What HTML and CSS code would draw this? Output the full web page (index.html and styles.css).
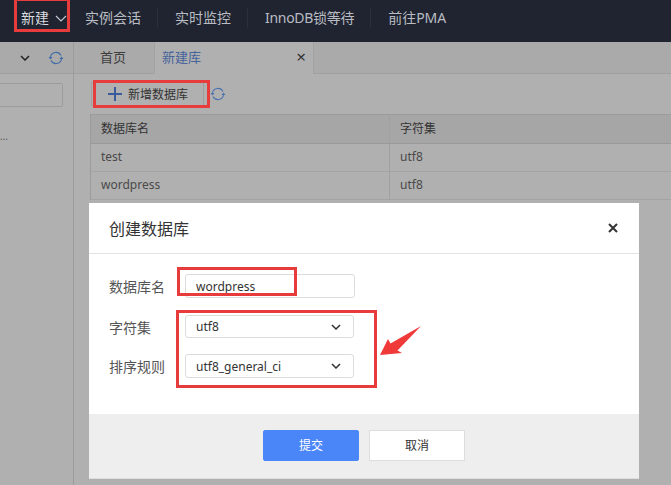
FILE: index.html
```html
<!DOCTYPE html>
<html lang="zh-CN">
<head>
    <meta charset="UTF-8">
    <title>新建库</title>
    <link rel="stylesheet" href="styles.css">
</head>
<body>
    <div class="app">
        <div class="topbar">
            <a class="nav-item nav-first">新建 <svg class="nav-caret" width="12" height="7" viewBox="0 0 12 7"><path d="M1 1l5 5 5-5" fill="none" stroke="#c4c8cf" stroke-width="1.2"/></svg></a>
            <a class="nav-item">实例会话</a>
            <a class="nav-item">实时监控</a>
            <a class="nav-item nav-tight">InnoDB锁等待</a>
            <a class="nav-item nav-last">前往PMA</a>
        </div>

        <div class="shell">
            <div class="sidebar">
                <div class="side-top">
                    <svg width="10" height="6" viewBox="0 0 10 6"><path d="M1 1l4 4 4-4" fill="none" stroke="#222" stroke-width="1.5"/></svg>
                    <svg class="refresh" width="16" height="16" viewBox="0 0 16 16"><path d="M2.5 7A5.6 5.6 0 0 1 13 5.5M13.500 9A5.6 5.6 0 0 1 3 10.500" fill="none" stroke="#3f6ba8" stroke-width="1.100"/><path d="M0.500 7h4L2.500 9.500zM11.500 9h4L13.500 6.500z" fill="#3f6ba8"/></svg>
                </div>
                <div class="side-search"></div>
                <div class="side-node">...</div>
            </div>

            <div class="main">
                <div class="tabs">
                    <div class="tab">首页</div>
                    <div class="tab tab-active"><span>新建库</span><span class="tab-close">×</span></div>
                </div>
                <div class="toolbar">
                    <div class="add-btn">
                        <svg width="14" height="14" viewBox="0 0 14 14"><path d="M7 0v14M0 7h14" stroke="#3b5a99" stroke-width="2"/></svg>
                        新增数据库
                    </div>
                    <svg class="refresh" width="16" height="16" viewBox="0 0 16 16"><path d="M2.500 7A5.600 5.600 0 0 1 13 5.500M13.500 9A5.600 5.600 0 0 1 3 10.500" fill="none" stroke="#4d74ad" stroke-width="1.100"/><path d="M0.500 7h4L2.500 9.500zM11.500 9h4L13.500 6.500z" fill="#4d74ad"/></svg>
                </div>
                <div class="db-table">
                    <div class="db-row db-head"><div class="cell-name">数据库名</div><div class="cell-charset">字符集</div></div>
                    <div class="db-row"><div class="cell-name">test</div><div class="cell-charset">utf8</div></div>
                    <div class="db-row"><div class="cell-name">wordpress</div><div class="cell-charset">utf8</div></div>
                </div>
            </div>
        </div>

        <div class="modal">
            <div class="modal-head">
                <span>创建数据库</span>
                <svg width="10" height="10" viewBox="0 0 10 10"><path d="M1 1l8 8M9 1l-8 8" stroke="#333" stroke-width="2"/></svg>
            </div>
            <div class="modal-body">
                <div class="form-row form-row-name">
                    <label>数据库名</label>
                    <div class="field field-input">wordpress</div>
                </div>
                <div class="form-row form-row-charset">
                    <label>字符集</label>
                    <div class="field">utf8<svg width="10" height="6" viewBox="0 0 10 6"><path d="M1 1l4 4 4-4" fill="none" stroke="#333" stroke-width="1.500"/></svg></div>
                </div>
                <div class="form-row form-row-collation">
                    <label>排序规则</label>
                    <div class="field">utf8_general_ci<svg width="10" height="6" viewBox="0 0 10 6"><path d="M1 1l4 4 4-4" fill="none" stroke="#333" stroke-width="1.500"/></svg></div>
                </div>
            </div>
            <div class="modal-foot">
                <div class="btn btn-primary">提交</div>
                <div class="btn">取消</div>
            </div>
        </div>

        <!-- red marks drawn on top of the screenshot -->
        <div class="mark mark-new"></div>
        <div class="mark mark-add"></div>
        <div class="mark mark-name"></div>
        <div class="mark mark-selects"></div>
        <svg class="mark-arrow" width="44" height="32" viewBox="0 0 44 32"><path d="M1 30L9 14 11.500 18.500 42 1 18.500 25.500 23 28z" fill="#f03a3a"/></svg>
    </div>
</body>
</html>
```

FILE: styles.css
```css
* {
    box-sizing: border-box;
}
body {
    margin: 0;
    font-family: "Noto Sans", "Noto Sans CJK SC", sans-serif;
    font-size: 12px;
    color: #3a3a3a;
    background: #b0b0b0;
}
.app {
    position: relative;
    width: 671px;
    height: 485px;
    overflow: hidden;
}

/* top nav */
.topbar {
    display: flex;
    align-items: center;
    height: 42px;
    padding-left: 21px;
    padding-bottom: 7px;
    background: #1f2430;
    color: #b9bcc2;
    font-size: 14px;
    line-height: 20px;
}
.nav-item {
    padding-right: 16px;
    margin-right: 17px;
    border-right: 1px solid #2b303c;
    white-space: nowrap;
}
.nav-first {
    display: flex;
    align-items: center;
    gap: 6px;
    padding-right: 0;
    margin-right: 18px;
    border-right: 0;
    color: #d8dade;
}
.nav-caret {
    margin-top: 2px;
}
.nav-tight {
    letter-spacing: -0.3px;
}
.nav-last {
    border-right: 0;
}

/* sidebar + main */
.shell {
    display: flex;
    height: 443px;
}
.sidebar {
    width: 74px;
    flex: none;
    border-right: 1px solid #9b9b9b;
}
.side-top {
    display: flex;
    align-items: center;
    justify-content: flex-end;
    gap: 18px;
    height: 32px;
    padding-right: 9px;
    background: #aaa;
    border-bottom: 1px solid #a0a0a0;
}
.side-search {
    width: 63px;
    height: 24px;
    margin-top: 9px;
    border: 1px solid #9c9c9c;
    border-left: 0;
    border-radius: 0 2px 2px 0;
}
.side-node {
    margin-top: 22px;
    font-size: 10px;
    line-height: 14px;
    color: #555;
}
.main {
    flex: 1;
    min-width: 0;
}
.tabs {
    display: flex;
    height: 32px;
    background: #aaa;
    border-bottom: 1px solid #a0a0a0;
    font-size: 13px;
}
.tab {
    width: 80px;
    padding-left: 26px;
    line-height: 31px;
    color: #3d3d3d;
}
.tab-active {
    display: flex;
    justify-content: space-between;
    width: 160px;
    height: 32px;
    padding: 0 7px;
    background: #b0b0b0;
    border-left: 1px solid #a2a2a2;
    border-right: 1px solid #a2a2a2;
    color: #46639c;
}
.tab-close {
    font-size: 17px;
    line-height: 29px;
    color: #333;
}
.toolbar {
    display: flex;
    align-items: center;
    gap: 6px;
    height: 40px;
    padding-left: 17px;
    padding-bottom: 1px;
}
.add-btn {
    display: flex;
    align-items: center;
    gap: 6px;
    width: 113px;
    height: 24px;
    padding-left: 16px;
    border: 1px solid #a0a0a0;
    font-size: 12px;
    color: #333;
}

/* database table */
.db-table {
    margin-left: 16px;
    border-left: 1px solid #9c9c9c;
    border-top: 1px solid #9c9c9c;
}
.db-row {
    display: flex;
    height: 28px;
    border-bottom: 1px solid #a3a3a3;
    line-height: 25px;
    color: #4a4a4a;
}
.db-head {
    height: 29px;
    line-height: 27px;
    background: #a6a6a6;
    border-bottom-color: #999;
    color: #333;
}
.cell-name {
    width: 299px;
    padding-left: 10px;
    border-right: 1px solid #a0a0a0;
}
.cell-charset {
    padding-left: 10px;
}

/* modal */
.modal {
    position: absolute;
    left: 89px;
    top: 203px;
    width: 550px;
    height: 276px;
    display: flex;
    flex-direction: column;
    background: #fff;
}
.modal-head {
    display: flex;
    align-items: center;
    justify-content: space-between;
    height: 51px;
    padding: 0 21px 0 20px;
    border-bottom: 1px solid #e4e4e4;
    font-size: 16px;
    color: #333;
}
.modal-body {
    flex: 1;
    padding: 20px 20px 0;
}
.form-row {
    display: flex;
    align-items: center;
}
.form-row label {
    width: 76px;
    flex: none;
    font-size: 14px;
    color: #555;
}
.form-row-name {
    height: 24px;
    margin-bottom: 17px;
}
.form-row-charset {
    height: 23px;
    margin-bottom: 16px;
}
.form-row-collation {
    height: 24px;
}
.field {
    display: flex;
    align-items: center;
    justify-content: space-between;
    width: 169px;
    height: 100%;
    padding: 0 12px 0 10px;
    border: 1px solid #dcdcdc;
    border-radius: 3px;
    font-size: 12px;
    color: #333;
}
.field-input {
    width: 170px;
}
.modal-foot {
    display: flex;
    justify-content: center;
    gap: 10px;
    height: 65px;
    padding-top: 16px;
    background: #eee;
    border-bottom: 1px solid #ddd;
}
.btn {
    width: 96px;
    height: 31px;
    line-height: 29px;
    text-align: center;
    background: #fff;
    border: 1px solid #ddd;
    font-size: 12px;
    color: #333;
}
.btn-primary {
    background: #4a86f7;
    border-color: #4a86f7;
    border-radius: 2px;
    color: #fff;
}

/* annotations */
.mark {
    position: absolute;
    border: 3px solid #e83c3c;
}
.mark-new {
    left: 14px;
    top: -2px;
    width: 56px;
    height: 34px;
}
.mark-add {
    left: 93px;
    top: 80px;
    width: 117px;
    height: 28px;
}
.mark-name {
    left: 177px;
    top: 267px;
    width: 120px;
    height: 29px;
}
.mark-selects {
    left: 176px;
    top: 310px;
    width: 201px;
    height: 78px;
}
.mark-arrow {
    position: absolute;
    left: 379px;
    top: 325px;
}
```
